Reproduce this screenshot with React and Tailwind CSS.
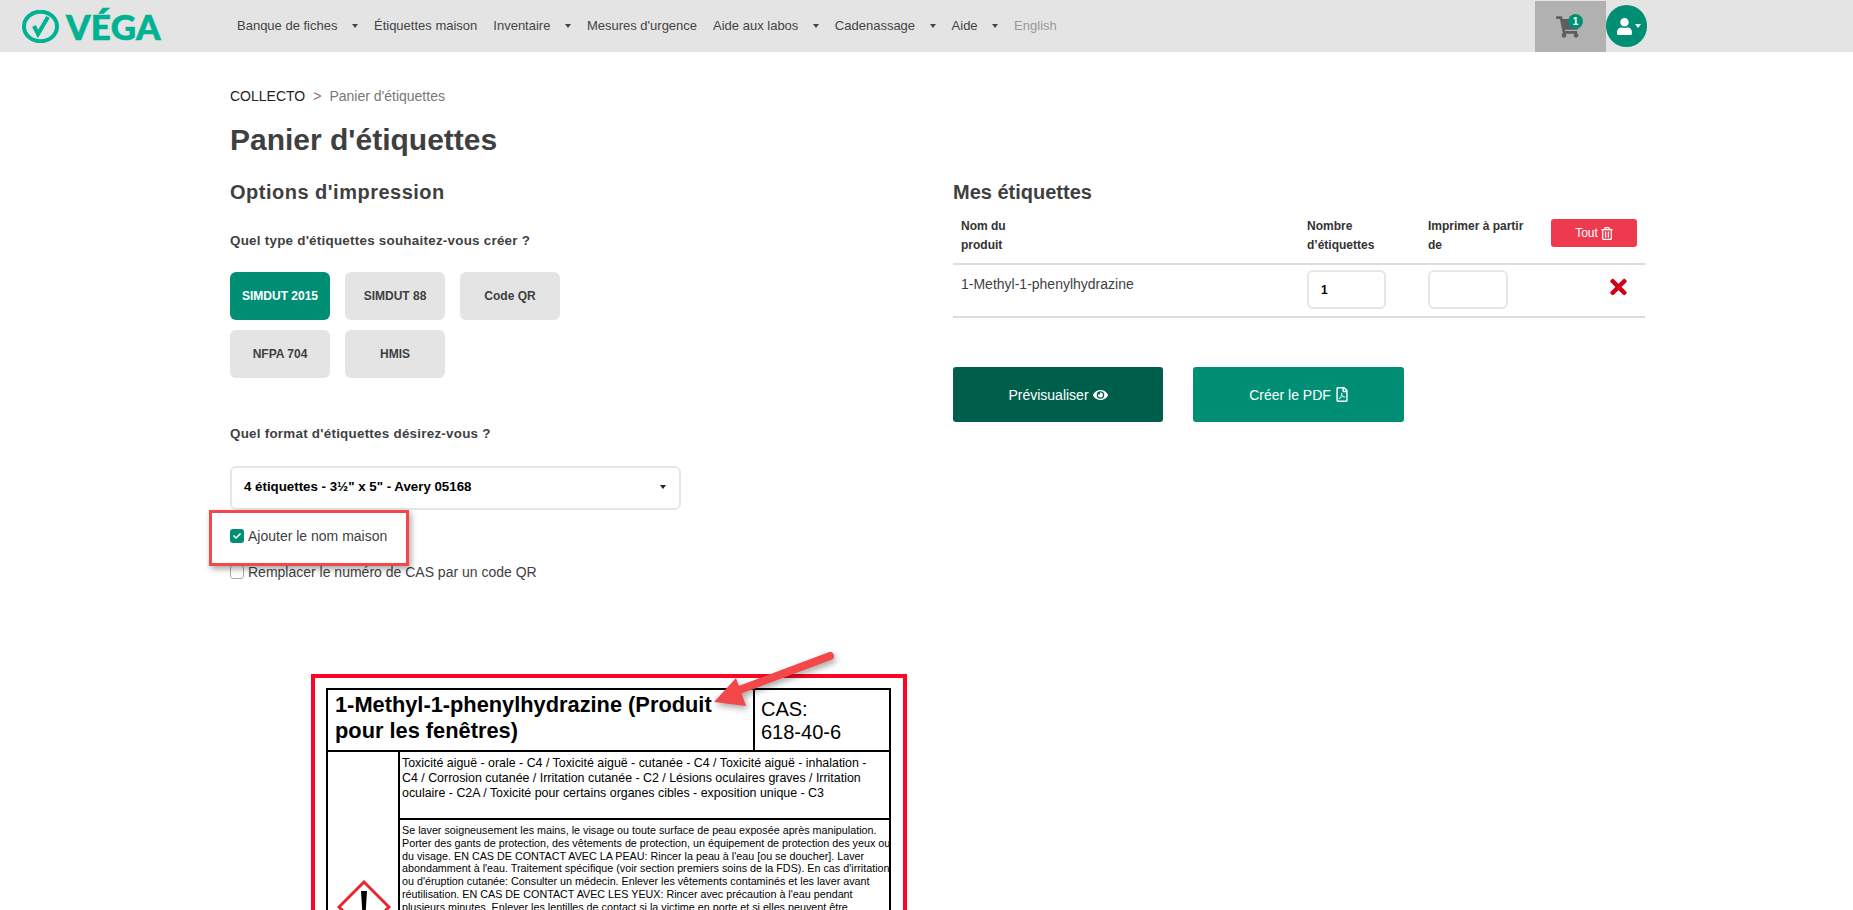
import React from "react";
import { FaShoppingCart, FaUser, FaRegTrashAlt, FaEye, FaRegFilePdf, FaTimes, FaCheck } from "react-icons/fa";

const Caret = ({ className = "ml-[14.5px] border-t-[#444]" }) => (
  <span className={`inline-block w-0 h-0 border-x-[3px] border-x-transparent border-t-[4px] ${className}`} />
);

const navItems = [
  ["Banque de fiches", true],
  ["Étiquettes maison", false],
  ["Inventaire", true],
  ["Mesures d'urgence", false],
  ["Aide aux labos", true],
  ["Cadenassage", true],
  ["Aide", true],
];

const hazard = [
  "Toxicité aiguë - orale - C4 / Toxicité aiguë - cutanée - C4 / Toxicité aiguë - inhalation -",
  "C4 / Corrosion cutanée / Irritation cutanée - C2 / Lésions oculaires graves / Irritation",
  "oculaire - C2A / Toxicité pour certains organes cibles - exposition unique - C3",
];

const precaution = [
  "Se laver soigneusement les mains, le visage ou toute surface de peau exposée après manipulation.",
  "Porter des gants de protection, des vêtements de protection, un équipement de protection des yeux ou",
  "du visage. EN CAS DE CONTACT AVEC LA PEAU: Rincer la peau à l'eau [ou se doucher]. Laver",
  "abondamment à l'eau. Traitement spécifique (voir section premiers soins de la FDS). En cas d'irritation",
  "ou d'éruption cutanée: Consulter un médecin. Enlever les vêtements contaminés et les laver avant",
  "réutilisation. EN CAS DE CONTACT AVEC LES YEUX: Rincer avec précaution à l'eau pendant",
];

const TypeButton = ({ children, active }) => (
  <button
    className={`h-12 w-[100px] rounded-md text-xs font-bold ${
      active ? "bg-[#008f75] text-white" : "bg-[#e4e4e4] text-[#3f3f3f]"
    }`}
  >
    {children}
  </button>
);

export default function App() {
  return (
    <div className="relative h-[910px] overflow-hidden bg-white font-['Liberation_Sans',Arial,sans-serif] text-[#3f3f3f]">
      <header className="flex h-[52px] items-center bg-[#e4e4e4]">
        <div className="ml-[22px] flex w-[215px] items-center text-[#00b294]">
          <svg width="37" height="33" viewBox="0 0 37 33" fill="none" stroke="currentColor">
            <ellipse cx="18.5" cy="16.5" rx="16.5" ry="14.8" strokeWidth="4" />
            <path d="M12 16 L16 24 L26 7" strokeWidth="4" />
          </svg>
          <span className="ml-[7px] font-['Lato',sans-serif] text-[35px] leading-none font-black tracking-[0.3px] [-webkit-text-stroke:0.6px_#00b294]">VÉGA</span>
        </div>
        <nav className="flex items-center gap-[16px] text-[13px] text-[#444]">
          {navItems.map(([label, caret]) => (
            <span key={label} className="flex items-center whitespace-nowrap">
              {label}
              {caret && <Caret />}
            </span>
          ))}
          <span className="text-[#999]">English</span>
        </nav>
        <div className="relative ml-auto flex h-[51px] w-[71px] items-center justify-center self-end bg-[#b1b1b1] pr-[6px] text-[#5e5e5e]">
          <FaShoppingCart className="h-[22px] w-[24px]" />
          <span className="absolute left-[33px] top-[13px] flex h-[15px] w-[15px] items-center justify-center rounded-full bg-[#008f75] text-[10px] font-bold text-white">1</span>
        </div>
        <div className="mr-[206px] flex h-[42px] w-[41px] items-center justify-center rounded-full bg-[#008f75] pl-[5px] text-white">
          <FaUser className="h-[17px] w-[15px]" />
          <Caret className="ml-[3px] border-t-white" />
        </div>
      </header>

      <main className="ml-[230px]">
        <div className="mt-[34px] text-sm leading-5">
          <span className="text-[#222]">COLLECTO</span>
          <span className="mx-[8px] text-[#777]">&gt;</span>
          <span className="text-[#777]">Panier d'étiquettes</span>
        </div>
        <h1 className="mt-[16px] text-[30px] leading-9 font-bold">Panier d'étiquettes</h1>

        <div className="mt-[20px] flex">
          <section className="w-[723px] shrink-0">
            <h2 className="text-xl leading-7 font-bold tracking-[0.5px]">Options d'impression</h2>
            <p className="mt-[25px] text-[13.4px] leading-5 font-bold tracking-[0.25px]">Quel type d'étiquettes souhaitez-vous créer ?</p>
            <div className="mt-[21px] grid w-[330px] grid-cols-3 gap-x-[15px] gap-y-[10px]">
              <TypeButton active>SIMDUT 2015</TypeButton>
              <TypeButton>SIMDUT 88</TypeButton>
              <TypeButton>Code QR</TypeButton>
              <TypeButton>NFPA 704</TypeButton>
              <TypeButton>HMIS</TypeButton>
            </div>
            <p className="mt-[46px] text-[13.4px] leading-5 font-bold tracking-[0.25px]">Quel format d'étiquettes désirez-vous ?</p>
            <div className="mt-[22px] flex h-[44px] w-[451px] items-center justify-between rounded-md border-2 border-[#e6e6e6] pb-[2px] pl-[12px] pr-[13px] text-[13.3px] font-bold text-black">
              <span>4 étiquettes - 3½" x 5" - Avery 05168</span>
              <Caret className="border-t-[#222]" />
            </div>
            <label className="mt-[16px] flex h-5 items-center text-sm">
              <span className="flex h-[14px] w-[14px] items-center justify-center rounded-[3px] bg-[#008f75] text-white">
                <FaCheck className="h-[8px] w-[8px]" />
              </span>
              <span className="ml-[4px]">Ajouter le nom maison</span>
            </label>
            <label className="mt-[16px] flex h-5 items-center text-sm">
              <span className="h-[14px] w-[14px] rounded-[3px] border border-[#aaa]" />
              <span className="ml-[4px]">Remplacer le numéro de CAS par un code QR</span>
            </label>

            <div className="ml-[81px] mt-[92px] w-[596px] border-4 border-[#fe0526] pl-[11px] pr-[12px] pt-[10px] text-black">
              <div className="border-2 border-black">
                <div className="flex h-[62px] border-b-2 border-black">
                  <div className="w-[427px] border-r-2 border-black px-[7px] pt-[2px] text-[21.8px] leading-[26px] font-bold">
                    1-Methyl-1-phenylhydrazine (Produit pour les fenêtres)
                  </div>
                  <div className="px-[6px] pt-[8px] text-xl leading-[23px]">CAS:<br />618-40-6</div>
                </div>
                <div className="flex">
                  <div className="w-[72px] shrink-0 border-r-2 border-black pl-[9px] pt-[128px]">
                    <svg width="54" height="54" viewBox="0 0 54 54">
                      <path d="M27 2 L52 27 L27 52 L2 27 Z" fill="#fff" stroke="#e8262d" strokeWidth="3" />
                      <path d="M24 11 H30 L28.8 30 H25.2 Z" fill="#000" />
                      <circle cx="27" cy="35" r="3" fill="#000" />
                    </svg>
                  </div>
                  <div className="min-w-0 flex-1">
                    <div className="h-[68px] border-b-2 border-black pl-[2px] pt-[4px] text-[12.4px] leading-[15px] whitespace-nowrap">
                      {hazard.map((l) => <div key={l}>{l}</div>)}
                    </div>
                    <div className="pl-[2px] pt-[4px] text-[10.75px] leading-[12.8px] whitespace-nowrap">
                      {precaution.map((l) => <div key={l}>{l}</div>)}
                      <div>plusieurs minutes. Enlever les lentilles de contact si la victime en porte et si elles peuvent être</div>
                    </div>
                  </div>
                </div>
              </div>
            </div>
          </section>

          <section className="w-[692px] shrink-0">
            <h2 className="text-xl leading-7 font-bold">Mes étiquettes</h2>
            <div className="grid h-[59px] grid-cols-[354px_121px_123px_94px] border-b-2 border-[#ddd] pt-[11px] text-xs leading-[19px] font-bold text-[#333]">
              <div className="pl-2">Nom du<br />produit</div>
              <div>Nombre<br />d’étiquettes</div>
              <div>Imprimer à partir<br />de</div>
              <div>
                <button className="mt-[2px] flex h-[28px] w-[86px] items-center justify-center gap-[3px] rounded-[3px] bg-[#ee3a4f] font-normal text-white">
                  Tout <FaRegTrashAlt className="h-[13px] w-[12px]" />
                </button>
              </div>
            </div>
            <div className="grid h-[53px] grid-cols-[354px_121px_123px_94px] border-b-2 border-[#ddd] text-sm">
              <div className="pl-2 pt-[9px]">1-Methyl-1-phenylhydrazine</div>
              <div className="pt-[5px]">
                <div className="flex h-[39px] w-[79px] items-center rounded-md border-2 border-[#e6e6e6] pl-[12px] text-xs font-bold text-black">1</div>
              </div>
              <div className="pt-[5px]">
                <div className="h-[39px] w-[80px] rounded-md border-2 border-[#e6e6e6]" />
              </div>
              <div className="pl-[59px] pt-[10px] text-[#d0021b]">
                <FaTimes className="h-[24px] w-[17px]" />
              </div>
            </div>
            <div className="mt-[49px] flex gap-[30px] text-sm">
              <button className="flex h-[55px] w-[210px] items-center justify-center gap-[4px] rounded-[3px] bg-[#005f4b] text-white">
                Prévisualiser <FaEye className="h-[14px] w-[15px]" />
              </button>
              <button className="flex h-[55px] w-[211px] items-center justify-center gap-[5px] rounded-[3px] bg-[#008f75] text-white">
                Créer le PDF <FaRegFilePdf className="h-[15px] w-[12px]" />
              </button>
            </div>
          </section>
        </div>
      </main>

      <div className="absolute left-[209px] top-[510px] h-[56px] w-[200px] border-[3px] border-[#f4474a] shadow-[2px_3px_6px_rgba(0,0,0,0.35)]" />
      <svg className="absolute left-[700px] top-[640px] drop-shadow-[2px_3px_3px_rgba(0,0,0,0.35)]" width="150" height="80" viewBox="0 0 150 80">
        <path d="M130 16 L34 52" stroke="#f4474a" strokeWidth="8" strokeLinecap="round" />
        <path d="M14 62 L36 38 L46 66 Z" fill="#f4474a" />
      </svg>
    </div>
  );
}
